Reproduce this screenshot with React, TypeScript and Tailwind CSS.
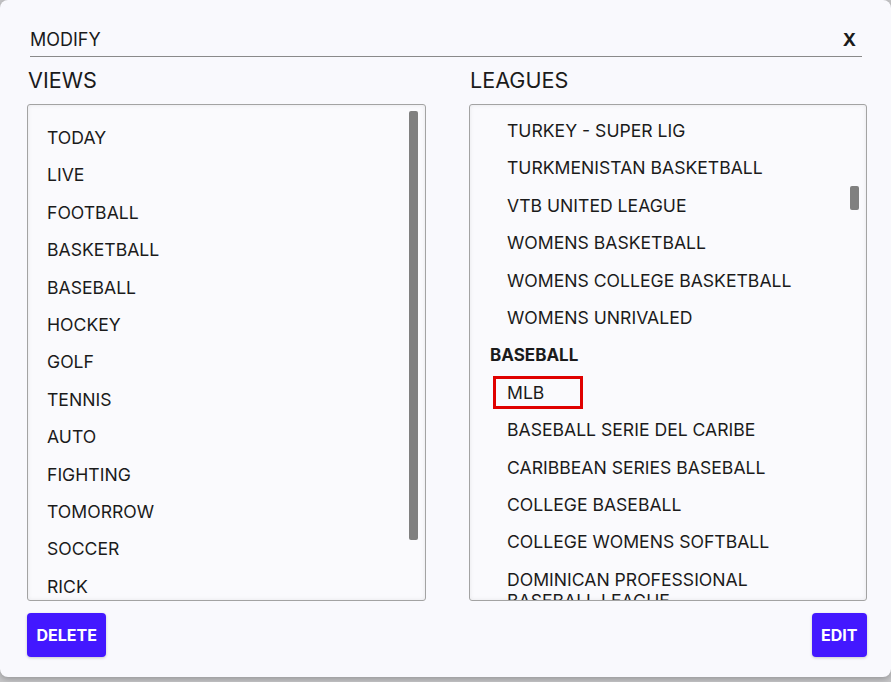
import React from "react";

const views = [
  "TODAY",
  "LIVE",
  "FOOTBALL",
  "BASKETBALL",
  "BASEBALL",
  "HOCKEY",
  "GOLF",
  "TENNIS",
  "AUTO",
  "FIGHTING",
  "TOMORROW",
  "SOCCER",
  "RICK",
];

type LeagueRow = { label: string; kind: "item" | "group" | "selected" | "wrap"; second?: string };

const leagues: LeagueRow[] = [
  { label: "TURKEY - SUPER LIG", kind: "item" },
  { label: "TURKMENISTAN BASKETBALL", kind: "item" },
  { label: "VTB UNITED LEAGUE", kind: "item" },
  { label: "WOMENS BASKETBALL", kind: "item" },
  { label: "WOMENS COLLEGE BASKETBALL", kind: "item" },
  { label: "WOMENS UNRIVALED", kind: "item" },
  { label: "BASEBALL", kind: "group" },
  { label: "MLB", kind: "selected" },
  { label: "BASEBALL SERIE DEL CARIBE", kind: "item" },
  { label: "CARIBBEAN SERIES BASEBALL", kind: "item" },
  { label: "COLLEGE BASEBALL", kind: "item" },
  { label: "COLLEGE WOMENS SOFTBALL", kind: "item" },
  { label: "DOMINICAN PROFESSIONAL", second: "BASEBALL LEAGUE", kind: "wrap" },
];

export default function App() {
  return (
    <div
      className="w-[891px] h-[682px] bg-[#c6c6c8] overflow-hidden"
      style={{ fontFamily: "Inter, 'Noto Sans', sans-serif" }}
    >
      <div className="h-[677px] bg-[#f9f9fd] rounded-lg shadow-[0_2px_6px_rgba(0,0,0,0.25)] flex flex-col pl-[27px] pr-[24px] text-[#1b1b1b]">
        {/* title bar */}
        <div className="mt-[27px] ml-[3px] mr-[5px] h-[30px] border-b border-[#8a8a8a] flex items-center justify-between">
          <span className="text-[18px] leading-none -mt-[3px]">MODIFY</span>
          <span className="text-[18px] font-bold leading-none -mt-[3px] mr-[6px]">X</span>
        </div>

        <div className="flex gap-[43px] mt-[11px]">
          {/* views column */}
          <div className="w-[399px] shrink-0 flex flex-col">
            <div className="text-[21.6px] leading-[26px] h-[26px] ml-[1px] -mt-[1px] mb-[1px]">VIEWS</div>
            <div className="relative mt-[10px] h-[497px] border border-[#a3a3a3] rounded-[3px] bg-[#fafafd] shadow-[inset_0_0_4px_rgba(0,0,0,0.08)] overflow-hidden">
              <div className="pt-[14.5px] pl-[19px]">
                {views.map((v) => (
                  <div key={v} className="h-[37.4px] flex items-center text-[17.6px]">
                    {v}
                  </div>
                ))}
              </div>
              <div className="absolute left-[381px] top-[6px] w-[9px] h-[429px] rounded-[2px] bg-[#808080]" />
            </div>
            <div className="mt-[12px]">
              <button className="h-[44px] px-[9.5px] rounded-[4px] bg-[#4318ff] text-white text-[16px] font-bold shadow-[0_1px_3px_rgba(0,0,0,0.2)]">
                DELETE
              </button>
            </div>
          </div>

          {/* leagues column */}
          <div className="w-[398px] shrink-0 flex flex-col">
            <div className="text-[21.6px] leading-[26px] h-[26px] ml-[1px] -mt-[1px] mb-[1px]">LEAGUES</div>
            <div className="relative mt-[10px] h-[497px] border border-[#a3a3a3] rounded-[3px] bg-[#fafafd] shadow-[inset_0_0_4px_rgba(0,0,0,0.08)] overflow-hidden">
              <div className="pt-[7.5px] pl-[20px]">
                {leagues.map((l) => {
                  if (l.kind === "group") {
                    return (
                      <div key={l.label} className="h-[37.4px] flex items-center text-[17px] font-bold">
                        {l.label}
                      </div>
                    );
                  }
                  if (l.kind === "selected") {
                    return (
                      <div key={l.label} className="h-[37.4px] flex items-center">
                        <div className="w-[90px] h-[33px] ml-[3px] border-[3px] border-solid border-[#e00000] flex items-center pl-[11px] text-[17.6px]">
                          {l.label}
                        </div>
                      </div>
                    );
                  }
                  if (l.kind === "wrap") {
                    return (
                      <div key={l.label} className="pl-[17px] pt-[8px] text-[17.6px] leading-[21px]">
                        <div>{l.label}</div>
                        <div>{l.second}</div>
                      </div>
                    );
                  }
                  return (
                    <div key={l.label} className="h-[37.4px] flex items-center pl-[17px] text-[17.6px]">
                      {l.label}
                    </div>
                  );
                })}
              </div>
              <div className="absolute left-[380px] top-[81px] w-[9px] h-[24px] rounded-[2px] bg-[#808080]" />
            </div>
            <div className="mt-[12px] flex justify-end">
              <button className="h-[44px] px-[9.5px] rounded-[4px] bg-[#4318ff] text-white text-[16px] font-bold shadow-[0_1px_3px_rgba(0,0,0,0.2)]">
                EDIT
              </button>
            </div>
          </div>
        </div>
      </div>
    </div>
  );
}
